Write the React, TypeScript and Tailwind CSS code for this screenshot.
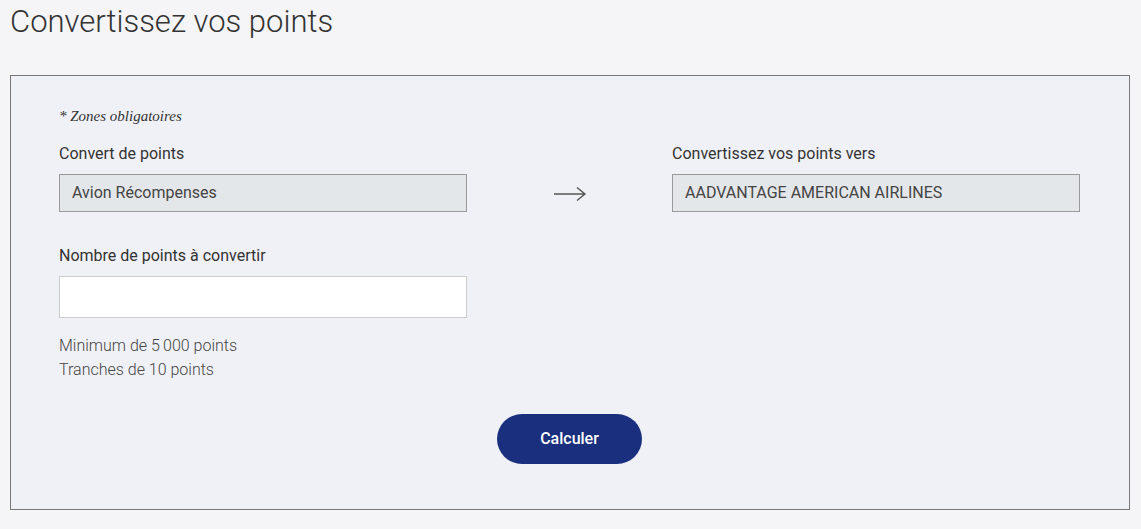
import { useState } from 'react';

function ArrowRight() {
  return (
    <svg width="34" height="16" viewBox="0 0 34 16" fill="none" className="block">
      <path d="M1 8H32M24 1.5L32 8L24 14.5" stroke="#555" strokeWidth="1.4" />
    </svg>
  );
}

export default function App() {
  const [points, setPoints] = useState('');

  return (
    <div className="min-h-[529px] bg-[#f5f5f7] px-[10px] pt-[4px] pb-[18px] font-['Roboto',sans-serif] text-[#333]">
      <h1 className="text-[31px] leading-[36px] font-light text-[#333]">Convertissez vos points</h1>

      <div className="mt-[35px] w-[1120px] border border-[#777] bg-[#f0f1f6] pl-[48px] pr-[49px] pt-[31px] pb-[45px]">
        <p className="font-['Liberation_Serif',serif] text-[15px] leading-[18px] italic text-[#333]">
          * Zones obligatoires
        </p>

        <div className="mt-[18px] grid grid-cols-[408px_1fr_408px]">
          <div>
            <label className="block text-[16px] leading-[22px]">Convert de points</label>
            <div className="mt-[9px] flex h-[38px] items-center border border-[#999] bg-[#e4e7ea] px-[12px] text-[16px] text-[#444]">
              Avion Récompenses
            </div>
          </div>
          <div className="flex items-end justify-center pb-[10px]">
            <ArrowRight />
          </div>
          <div>
            <label className="block text-[16px] leading-[22px]">Convertissez vos points vers</label>
            <div className="mt-[9px] flex h-[38px] items-center border border-[#999] bg-[#e4e7ea] px-[12px] text-[16px] text-[#444]">
              AADVANTAGE AMERICAN AIRLINES
            </div>
          </div>
        </div>

        <div className="mt-[33px] w-[408px]">
          <label className="block text-[16px] leading-[22px]">Nombre de points à convertir</label>
          <input
            value={points}
            onChange={(e) => setPoints(e.target.value)}
            className="mt-[9px] block h-[42px] w-full border border-[#ccc] bg-white px-[12px] text-[16px] outline-none"
          />
          <div className="mt-[16px] text-[16px] leading-[24px] font-light text-[#444]">
            <p>Minimum de 5&#8201;000 points</p>
            <p>Tranches de 10 points</p>
          </div>
        </div>

        <div className="mt-[32px] flex justify-center">
          <button className="h-[50px] w-[145px] rounded-full bg-[#1a2f7e] text-[16px] font-medium text-white">
            Calculer
          </button>
        </div>
      </div>
    </div>
  );
}
